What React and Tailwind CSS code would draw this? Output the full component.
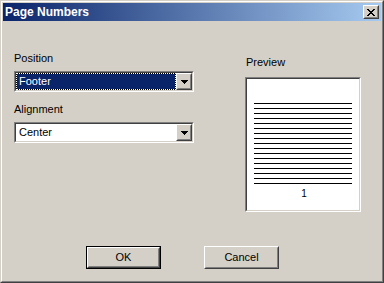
import React from "react";

function Raised({ className = "", children }) {
  return (
    <div className={"border border-t-white border-l-white border-r-[#404040] border-b-[#404040] " + className}>
      <div className="w-full h-full border border-t-[#d4d0c8] border-l-[#d4d0c8] border-r-[#808080] border-b-[#808080] flex items-center justify-center">
        {children}
      </div>
    </div>
  );
}

function Sunken({ className = "", children }) {
  return (
    <div className={"border border-t-[#808080] border-l-[#808080] border-r-white border-b-white " + className}>
      <div className="w-full h-full border border-t-[#404040] border-l-[#404040] border-r-[#d4d0c8] border-b-[#d4d0c8] flex">
        {children}
      </div>
    </div>
  );
}

function Arrow() {
  return (
    <svg width="7" height="4" viewBox="0 0 7 4" shapeRendering="crispEdges">
      <rect x="0" y="0" width="7" height="1" fill="#000" />
      <rect x="1" y="1" width="5" height="1" fill="#000" />
      <rect x="2" y="2" width="3" height="1" fill="#000" />
      <rect x="3" y="3" width="1" height="1" fill="#000" />
    </svg>
  );
}

function CloseX() {
  const rows = [0, 1, 2, 3, 4, 5, 6];
  return (
    <svg width="8" height="7" viewBox="0 0 8 7" shapeRendering="crispEdges">
      {rows.map((i) => (
        <g key={i}>
          <rect x={i} y={i} width="2" height="1" fill="#000" />
          <rect x={6 - i} y={i} width="2" height="1" fill="#000" />
        </g>
      ))}
    </svg>
  );
}

function Select({ value, selected }) {
  return (
    <Sunken className="w-[180px] h-[21px]">
      <div className="flex-1 h-full bg-white flex">
        {selected ? (
          <div className="flex-1 bg-black">
            <div className="w-full h-full border border-dotted border-white bg-[#0a246a] bg-clip-padding flex items-center pl-[2px] text-white text-[11px] leading-[13px]">
              {value}
            </div>
          </div>
        ) : (
          <div className="flex-1 flex items-center pl-[3px] text-black text-[11px] leading-[13px]">{value}</div>
        )}
      </div>
      <Raised className="w-[16px] h-full bg-[#d4d0c8]">
        <Arrow />
      </Raised>
    </Sunken>
  );
}

export default function App() {
  const lines = Array.from({ length: 17 });
  return (
    <div className="w-[384px] h-[283px] bg-[#d4d0c8] border border-t-[#d4d0c8] border-l-[#d4d0c8] border-r-[#404040] border-b-[#404040] font-['Liberation_Sans',Arial,sans-serif] text-black">
      <div className="h-full border border-t-white border-l-white border-r-[#808080] border-b-[#808080] p-px flex flex-col">
        <div className="h-[18px] bg-[linear-gradient(to_right,#0a246a,#a6caf0)] flex items-center pl-[2px] pr-[2px]">
          <span className="text-white font-bold text-[12px] leading-[14px]">Page Numbers</span>
          <Raised className="ml-auto w-[16px] h-[14px] bg-[#d4d0c8]">
            <CloseX />
          </Raised>
        </div>
        <div className="flex-1 flex flex-col">
          <div className="flex">
            <div className="ml-[11px] w-[180px] mt-[31px] flex flex-col">
              <div className="text-[11px] leading-[13px]">Position</div>
              <div className="mt-[6px]">
                <Select value="Footer" selected />
              </div>
              <div className="mt-[11px] text-[11px] leading-[13px]">Alignment</div>
              <div className="mt-[6px]">
                <Select value="Center" />
              </div>
            </div>
            <div className="ml-[51px] mt-[35px] flex flex-col">
              <div className="pl-px text-[11px] leading-[13px]">Preview</div>
              <Sunken className="mt-[8px] w-[116px] h-[135px]">
                <div className="flex-1 bg-white flex flex-col items-stretch pt-[24px] px-[7px]">
                  <div className="flex flex-col gap-[4px]">
                    {lines.map((_, i) => (
                      <div key={i} className="h-px bg-black" />
                    ))}
                  </div>
                  <div className="mt-[4px] text-center text-[10px] leading-[12px] pl-[2px] text-black">1</div>
                </div>
              </Sunken>
            </div>
          </div>
          <div className="mt-auto pb-[11px] pl-[83px] flex gap-[43px]">
            <div className="w-[75px] h-[23px] border border-black">
              <Raised className="w-full h-full bg-[#d4d0c8]">
                <span className="text-[11px] leading-[13px]">OK</span>
              </Raised>
            </div>
            <Raised className="w-[75px] h-[23px] bg-[#d4d0c8]">
              <span className="text-[11px] leading-[13px]">Cancel</span>
            </Raised>
          </div>
        </div>
      </div>
    </div>
  );
}
